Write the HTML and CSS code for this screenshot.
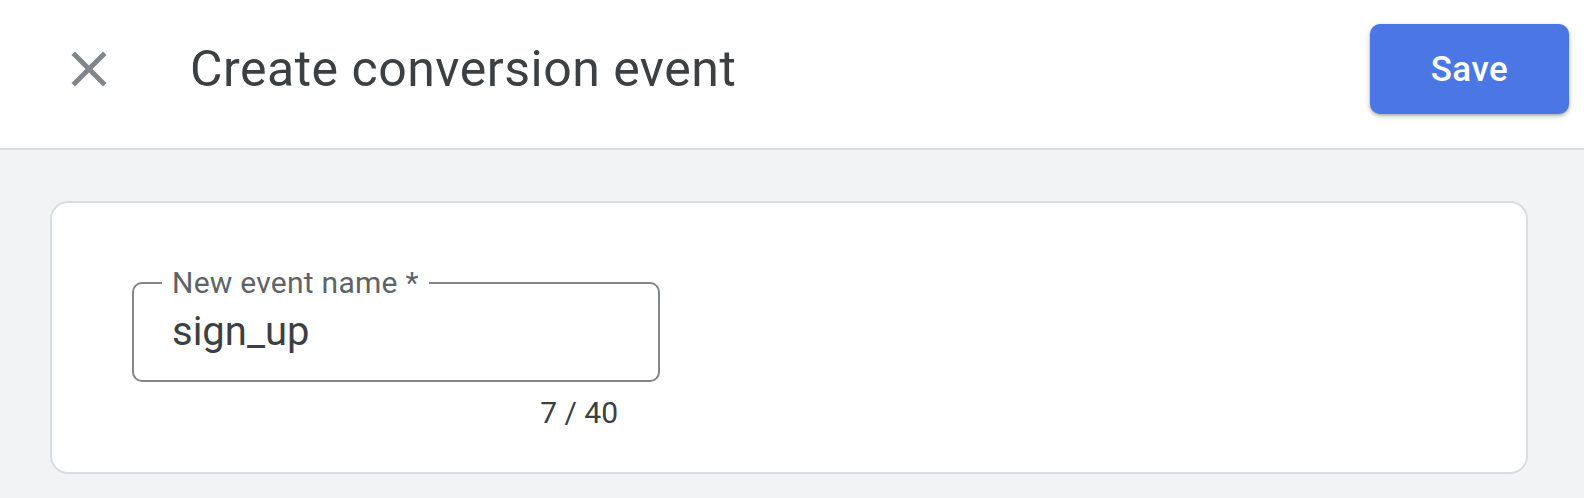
FILE: index.html
```html
<!DOCTYPE html>
<html lang="en">
<head>
<meta charset="utf-8">
<title>Create conversion event</title>
<link rel="stylesheet" href="styles.css">
</head>
<body>
<header class="topbar">
  <button class="close-btn" aria-label="Close">
    <svg viewBox="0 0 24 24" width="60" height="60" aria-hidden="true"><path d="M19 6.41L17.59 5 12 10.59 6.41 5 5 6.41 10.59 12 5 17.59 6.41 19 12 13.41 17.59 19 19 17.59 13.41 12z"/></svg>
  </button>
  <h1 class="title">Create conversion event</h1>
  <button class="save-btn">Save</button>
</header>
<main class="content">
  <section class="card">
    <div class="field">
      <fieldset class="outline">
        <legend class="label">New event name *</legend>
        <div class="value">sign_up</div>
      </fieldset>
      <div class="counter">7 / 40</div>
    </div>
  </section>
</main>
</body>
</html>
```
FILE: styles.css
```css
* { box-sizing: border-box; }
html, body { margin: 0; padding: 0; }
body {
  width: 1584px;
  height: 498px;
  overflow: hidden;
  background: #f1f3f4;
  font-family: Roboto, "Liberation Sans", Arial, sans-serif;
}
.topbar {
  display: flex;
  align-items: center;
  height: 150px;
  padding: 0 15px 10px 59px;
  background: #ffffff;
  border-bottom: 2px solid #dadce0;
}
.close-btn {
  width: 60px;
  height: 60px;
  padding: 0;
  border: 0;
  background: none;
  display: flex;
  align-items: center;
  justify-content: center;
}
.close-btn svg { fill: #80868b; display: block; }
.title {
  margin: 0 0 0 71px;
  font-size: 50px;
  font-weight: 400;
  letter-spacing: 0.5px;
  color: #3c4043;
  flex: 1;
  line-height: 60px;
}
.save-btn {
  width: 199px;
  height: 90px;
  border: 0;
  border-radius: 10px;
  background: #4a77e3;
  color: #ffffff;
  font-family: Roboto, "Liberation Sans", Arial, sans-serif;
  font-size: 35px;
  font-weight: 500;
  letter-spacing: 0.5px;
  box-shadow: 0 2px 5px rgba(60, 64, 67, 0.35), 0 1px 2px rgba(60, 64, 67, 0.2);
}
.content {
  padding: 51px 56px 0 50px;
}
.card {
  height: 273px;
  background: #ffffff;
  border: 2px solid #dadce0;
  border-radius: 18px;
  padding: 65px 80px 0 80px;
}
.field { width: 528px; }
.outline {
  margin: 0;
  border: 2px solid #80868b;
  border-radius: 10px;
  padding: 10px 38px 24px 38px;
  min-width: 0;
}
.label {
  margin-left: -10px;
  padding: 0 10px;
  font-size: 30px;
  line-height: 30px;
  letter-spacing: 0.25px;
  color: #5f6368;
}
.value {
  font-size: 40px;
  line-height: 48px;
  color: #3c4043;
}
.counter {
  margin-top: 13px;
  padding-right: 42px;
  text-align: right;
  font-size: 30px;
  line-height: 36px;
  color: #3c4043;
}
```
